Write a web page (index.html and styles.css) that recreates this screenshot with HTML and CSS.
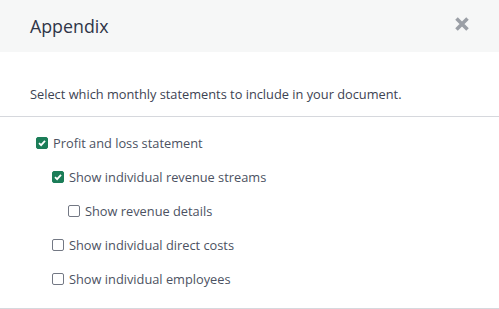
FILE: index.html
```html
<!DOCTYPE html>
<html>
<head>
<meta charset="utf-8">
<link rel="stylesheet" href="styles.css">
</head>
<body>
<div class="modal">
  <div class="header">
    <h1 class="title">Appendix</h1>
    <span class="close" aria-label="Close">
      <svg width="16" height="16" viewBox="0 0 16 16"><path d="M2.5 2.5 L13.5 13.5 M13.5 2.5 L2.5 13.5" stroke="#9b9fa6" stroke-width="3.6" stroke-linecap="butt"/></svg>
    </span>
  </div>
  <div class="intro">Select which monthly statements to include in your document.</div>
  <div class="options">
    <label class="opt lvl0"><span class="box on"><svg viewBox="0 0 12 12" width="12" height="12"><path d="M3 6.2 L5.1 8.2 L9 3.8" fill="none" stroke="#fff" stroke-width="1.8"/></svg></span>Profit and loss statement</label>
    <label class="opt lvl1"><span class="box on"><svg viewBox="0 0 12 12" width="12" height="12"><path d="M3 6.2 L5.1 8.2 L9 3.8" fill="none" stroke="#fff" stroke-width="1.8"/></svg></span>Show individual revenue streams</label>
    <label class="opt lvl2"><span class="box"></span>Show revenue details</label>
    <label class="opt lvl1"><span class="box"></span>Show individual direct costs</label>
    <label class="opt lvl1"><span class="box"></span>Show individual employees</label>
  </div>
</div>
</body>
</html>
```
FILE: styles.css
```css
html, body { margin: 0; padding: 0; background: #fff; }
body { font-family: "Open Sans", "Noto Sans", sans-serif; color: #3b4150; }
.modal { width: 499px; height: 309px; overflow: hidden; }
.header {
  height: 52px; background: #f6f7f7;
  display: flex; align-items: center; justify-content: space-between;
  padding: 0 29px 0 30px;
}
.title { margin: 0; font-size: 17.8px; font-weight: 400; color: #2f3547; }
.close { display: flex; width: 16px; height: 16px; margin-top: -4px; }
.intro {
  padding: 32px 30px 0; height: 32px; font-size: 12.8px; color: #3d4352;
  border-bottom: 1px solid #d6d8dd; line-height: 20px;
}
.options { padding: 20px 0 0; border-bottom: 1px solid #d6d8dd; height: 192px; box-sizing: border-box; }
.opt { display: flex; align-items: center; height: 12px; margin-bottom: 22px; font-size: 12.8px; color: #4c5262; }
.lvl0 { padding-left: 36px; }
.lvl1 { padding-left: 52px; }
.lvl2 { padding-left: 68px; }
.box {
  width: 12px; height: 12px; box-sizing: border-box; border-radius: 2px;
  border: 1px solid #737884; margin-right: 5px; display: flex; flex: none;
}
.box.on { background: #1b7d58; border-color: #1b7d58; }
.box.on svg { margin: -1px; }
```
